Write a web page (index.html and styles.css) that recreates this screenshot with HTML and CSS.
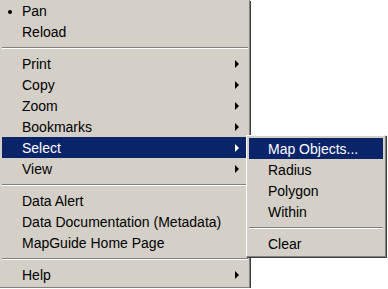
FILE: index.html
```html
<!DOCTYPE html>
<html lang="en">
<head>
    <meta charset="UTF-8">
    <title>Map Context Menu</title>
    <link rel="stylesheet" href="styles.css">
</head>
<body>
    <div class="menu">
        <div class="item checked">Pan</div>
        <div class="item">Reload</div>
        <div class="sep"></div>
        <div class="item sub">Print</div>
        <div class="item sub">Copy</div>
        <div class="item sub">Zoom</div>
        <div class="item sub">Bookmarks</div>
        <div class="item sub active">Select</div>
        <div class="item sub">View</div>
        <div class="sep"></div>
        <div class="item">Data Alert</div>
        <div class="item">Data Documentation (Metadata)</div>
        <div class="item">MapGuide Home Page</div>
        <div class="sep"></div>
        <div class="item sub">Help</div>

        <div class="menu submenu">
            <div class="item active">Map Objects...</div>
            <div class="item">Radius</div>
            <div class="item">Polygon</div>
            <div class="item">Within</div>
            <div class="sep"></div>
            <div class="item">Clear</div>
        </div>
    </div>
</body>
</html>
```

FILE: styles.css
```css
body { margin: 0; background: #fff; font-family: "Liberation Sans", Arial, sans-serif; font-size: 14px; }
.menu { position: relative; width: 247px; background: #d4d0c8; padding: 0 0 2px 2px; display: flex; flex-direction: column; border-right: 1px solid #808080; border-bottom: 1px solid #808080; box-shadow: 1px 1px 0 #404040; }
.item { position: relative; height: 21px; line-height: 23px; padding-left: 20px; color: #000; }
.item.checked::before { content: ""; position: absolute; left: 6px; top: 10px; width: 4px; height: 4px; border-radius: 50%; background: #000; }
.item.sub::after { content: ""; position: absolute; right: 10px; top: 7px; border-left: 4px solid #000; border-top: 4px solid transparent; border-bottom: 4px solid transparent; }
.item.active { background: #0a246a; color: #fff; }
.item.active.sub::after { border-left-color: #fff; }
.sep { height: 11px; display: flex; flex-direction: column; justify-content: center; margin-right: 1px; }
.sep::before { content: ""; display: block; border-top: 1px solid #808080; border-bottom: 1px solid #fff; }
.submenu { position: absolute; left: 246px; top: 135px; width: 134px; padding: 2px 2px 2px 2px; border-left: 1px solid #fff; border-top: 1px solid #fff; }
.submenu .item { padding-left: 19px; }
.submenu .sep { margin: 0; }
```
